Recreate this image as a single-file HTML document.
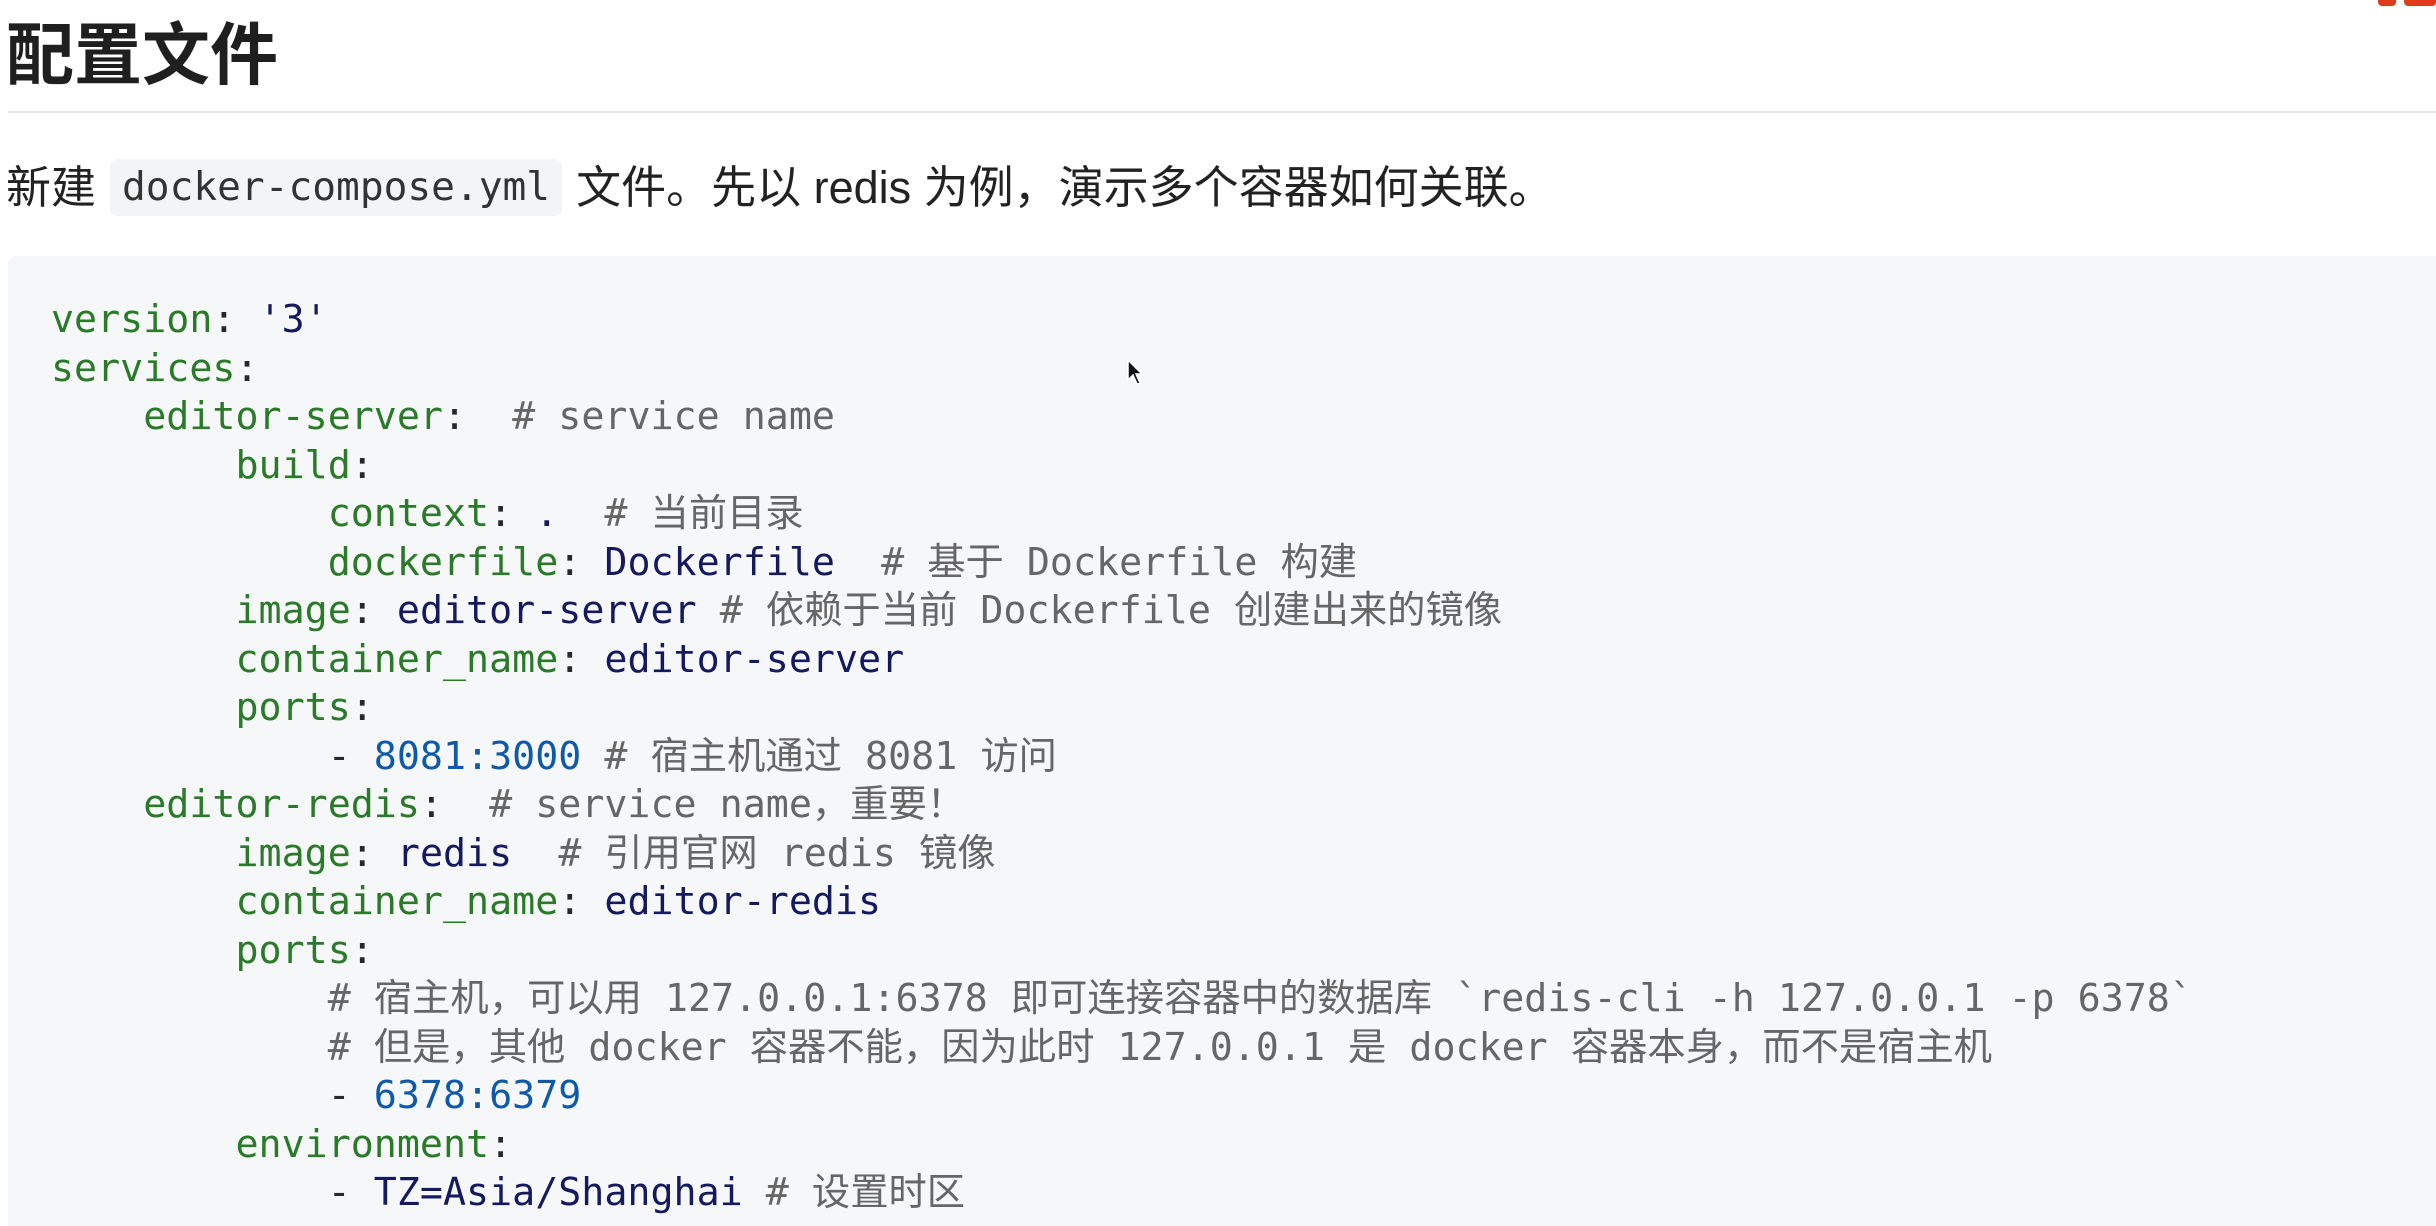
<!DOCTYPE html>
<html><head><meta charset="utf-8"><style>
html,body{margin:0;padding:0;background:#fff;width:2436px;height:1226px;overflow:hidden;position:relative}
.h{position:absolute;left:6px;top:12px;font:bold 68px/88px "Liberation Sans","Noto Sans CJK SC",sans-serif;color:#1f1f1f;margin:0}
.hr{position:absolute;left:8px;right:0;top:111px;height:2px;background:#e6e6e6}
.p{position:absolute;left:6px;top:160px;font:45px/56px "Liberation Sans","Noto Sans CJK SC",sans-serif;color:#222;white-space:nowrap}
.ic{display:inline-block;background:#f3f4f5;border-radius:8px;padding:0 12px;margin:0 14px;font:39.5px/57px "DejaVu Sans Mono","Noto Sans CJK SC",monospace;color:#333;vertical-align:middle;position:relative;top:-4px}
.cb{position:absolute;left:8px;right:0;top:256px;bottom:0;background:#f6f7f9;border-radius:8px 0 0 0}
pre{position:absolute;left:51px;top:296px;margin:0;font:38.3px/48.5px "DejaVu Sans Mono","Noto Sans CJK SC",monospace;color:#24292e}
.k{color:#2a7a2a}.v{color:#15195e}.n{color:#0f5aa8}.c{color:#666}
.red{position:absolute;top:0;height:6px;background:#e03a1a;border-radius:0 0 4px 4px}
</style></head><body>
<div class="red" style="left:2378px;width:18px"></div>
<div class="red" style="left:2404px;width:32px"></div>
<h1 class="h">配置文件</h1>
<div class="hr"></div>
<div class="p">新建<span class="ic">docker-compose.yml</span>文件。先以 redis 为例，演示多个容器如何关联。</div>
<div class="cb"></div>
<pre><span class="k">version</span>: <span class="v">'3'</span>
<span class="k">services</span>:
    <span class="k">editor-server</span>:  <span class="c"># service name</span>
        <span class="k">build</span>:
            <span class="k">context</span>: <span class="v">.</span>  <span class="c"># 当前目录</span>
            <span class="k">dockerfile</span>: <span class="v">Dockerfile</span>  <span class="c"># 基于 Dockerfile 构建</span>
        <span class="k">image</span>: <span class="v">editor-server</span> <span class="c"># 依赖于当前 Dockerfile 创建出来的镜像</span>
        <span class="k">container_name</span>: <span class="v">editor-server</span>
        <span class="k">ports</span>:
            - <span class="n">8081:3000</span> <span class="c"># 宿主机通过 8081 访问</span>
    <span class="k">editor-redis</span>:  <span class="c"># service name，重要！</span>
        <span class="k">image</span>: <span class="v">redis</span>  <span class="c"># 引用官网 redis 镜像</span>
        <span class="k">container_name</span>: <span class="v">editor-redis</span>
        <span class="k">ports</span>:
            <span class="c"># 宿主机，可以用 127.0.0.1:6378 即可连接容器中的数据库 `redis-cli -h 127.0.0.1 -p 6378`</span>
            <span class="c"># 但是，其他 docker 容器不能，因为此时 127.0.0.1 是 docker 容器本身，而不是宿主机</span>
            - <span class="n">6378:6379</span>
        <span class="k">environment</span>:
            - <span class="v">TZ=Asia/Shanghai</span> <span class="c"># 设置时区</span></pre>
<svg style="position:absolute;left:1126px;top:358px" width="18" height="28" viewBox="0 0 18 28"><path d="M2 2 L2 22 L7 17 L11 26 L14 25 L10 16 L16 16 Z" fill="#111" stroke="#fff" stroke-width="1.5"/></svg>
</body></html>
